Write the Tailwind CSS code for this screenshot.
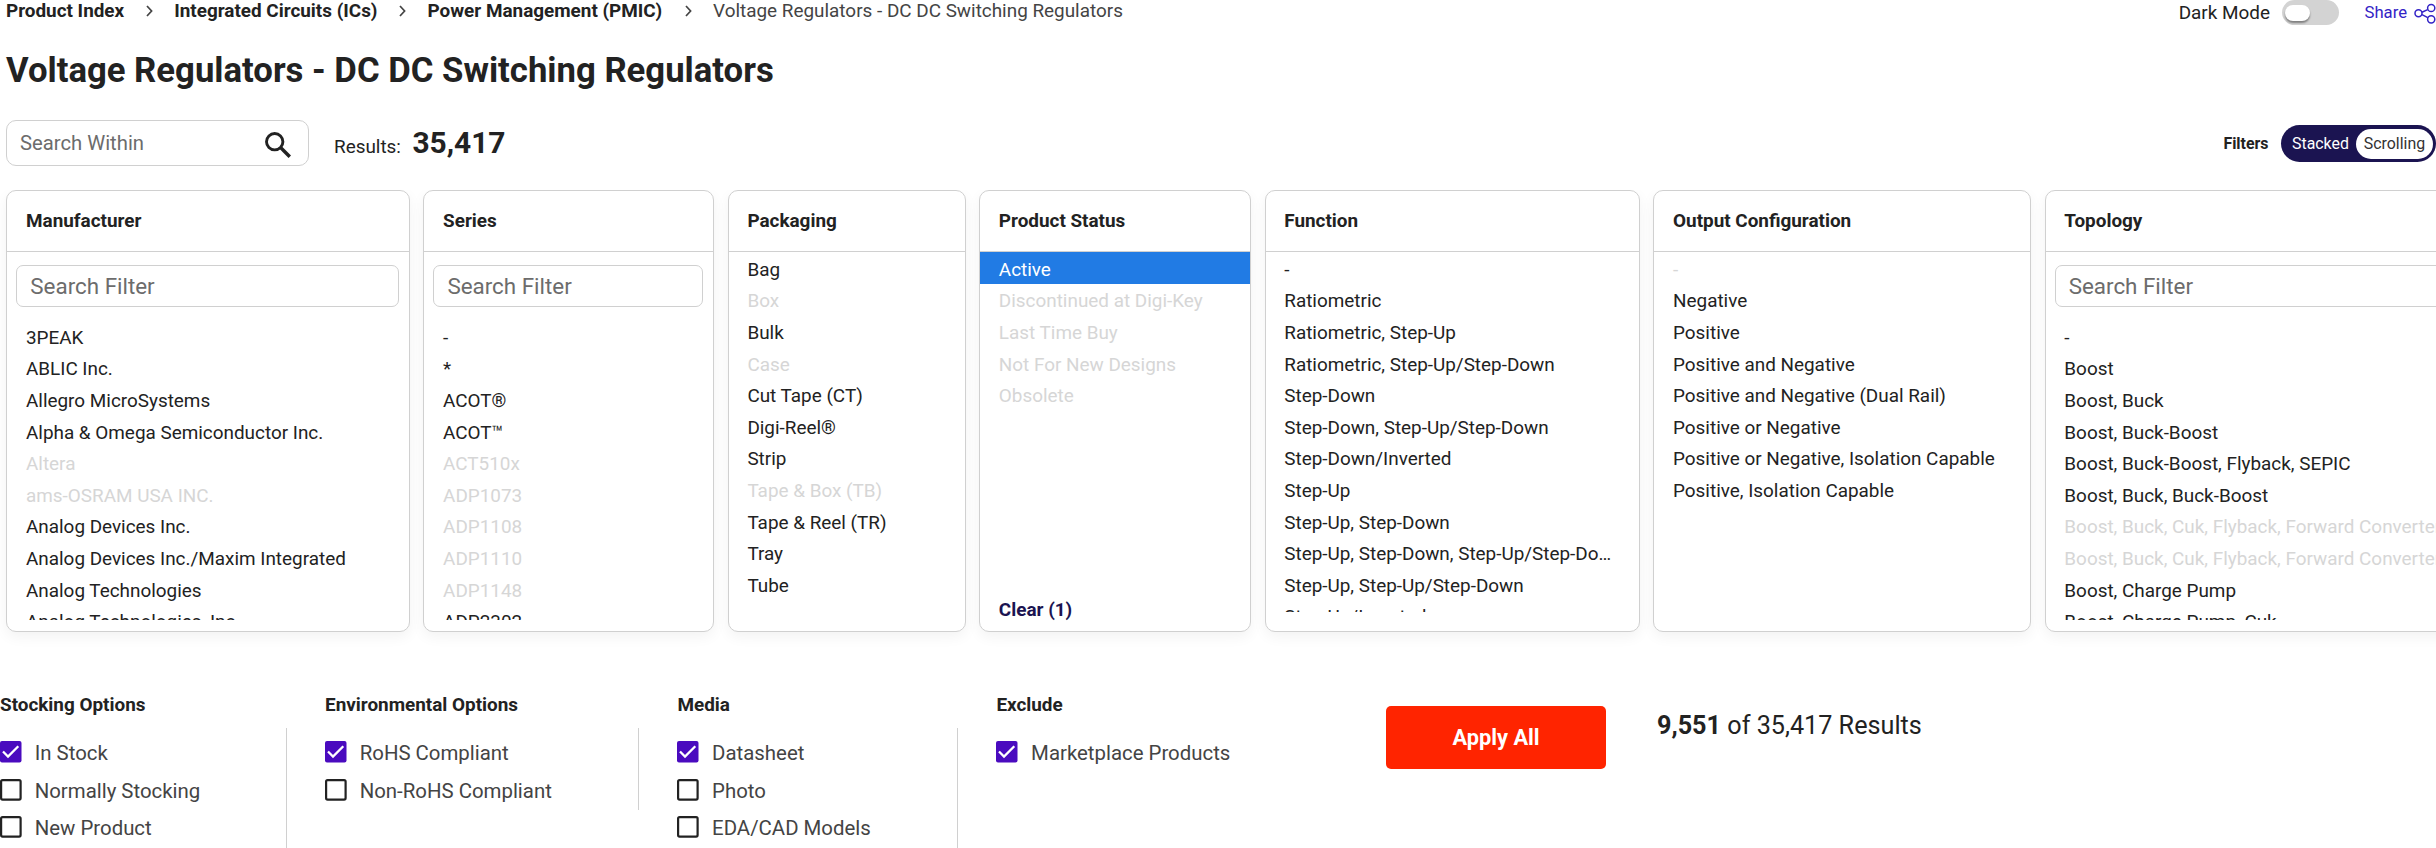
<!DOCTYPE html>
<html lang="en">
<head>
<meta charset="utf-8">
<title>Voltage Regulators - DC DC Switching Regulators</title>
<script src="https://cdn.jsdelivr.net/npm/@tailwindcss/browser@4"></script>
</head>
<body class="h-[848px] w-[2436px] overflow-hidden bg-white font-[Roboto,sans-serif] text-[18.9px] leading-[22px] text-[#222]">
  <header class="flex h-[25px] items-start justify-between pl-[6px]">
    <nav class="flex items-center font-bold">
      <span>Product Index</span>
      <svg class="mr-[21px] ml-[22px] h-3 w-[7px]" viewBox="0 0 7 12" fill="none" stroke="#444" stroke-width="1.7"><path d="M1 1l4.6 5L1 11"/></svg>
      <span>Integrated Circuits (ICs)</span>
      <svg class="mr-[21px] ml-[22px] h-3 w-[7px]" viewBox="0 0 7 12" fill="none" stroke="#444" stroke-width="1.7"><path d="M1 1l4.6 5L1 11"/></svg>
      <span>Power Management (PMIC)</span>
      <svg class="mr-[21.5px] ml-[22.5px] h-3 w-[7px]" viewBox="0 0 7 12" fill="none" stroke="#444" stroke-width="1.7"><path d="M1 1l4.6 5L1 11"/></svg>
      <span class="font-normal text-[#444]">Voltage Regulators - DC DC Switching Regulators</span>
    </nav>
    <div class="flex h-[25px] items-center">
      <span>Dark Mode</span>
      <span class="ml-[12px] flex h-[25px] w-[57px] items-center rounded-full bg-[#d3d3d3] pl-[3px]"><span class="h-4 w-[25px] rounded-full bg-white shadow-[0_2px_2px_rgba(0,0,0,0.4)]"></span></span>
      <span class="ml-[25.5px] text-[16.7px] text-[#3323c6]">Share</span>
      <svg class="ml-[7px] h-[25px] w-[22px]" viewBox="0 0 22 25" fill="none" stroke="#3323c6" stroke-width="1.5"><circle cx="4.5" cy="13.3" r="3.5"/><circle cx="17.2" cy="8" r="3.6"/><circle cx="17.2" cy="19.3" r="3.6"/><path d="M8 12.2l5.6-2.6M8 14.6l5.8 3"/></svg>
    </div>
  </header>
  <h1 class="mt-[25px] pl-[6px] text-[34.7px] leading-[40px] font-bold">Voltage Regulators - DC DC Switching Regulators</h1>

  <section class="mt-[30px] flex h-[46px] items-center justify-between pl-[6px]">
    <div class="flex items-center">
      <div class="flex h-[46px] w-[303px] items-center justify-between rounded-[10px] border border-[#d0d0d0] pr-[17px] pl-[13px] text-[20.25px] text-[#6c6c6c]">
        <span>Search Within</span>
        <svg class="mt-[4px] h-[26px] w-[26px]" viewBox="0 0 26 26" fill="none" stroke="#222" stroke-width="2.9"><circle cx="9.7" cy="9.7" r="8.2"/><path d="M15.8 15.8l9 9" stroke-width="3.4"/></svg>
      </div>
      <div class="mt-[-1px] ml-[25px] flex items-baseline gap-[11.5px]"><span>Results:</span><span class="text-[29.9px] leading-[30px] font-bold">35,417</span></div>
    </div>
    <div class="flex items-center pt-px text-[15.9px]">
      <span class="font-bold">Filters</span>
      <span class="ml-[12.5px] flex h-[37px] w-[155px] items-center rounded-full bg-[#1b1451] pr-[3px] pl-[11px] text-white">
        <span class="w-[64px]">Stacked</span>
        <span class="flex h-[30px] flex-1 items-center justify-center rounded-full bg-white text-[#333]">Scrolling</span>
      </span>
    </div>
  </section>

  <main id="filters" class="mt-[24px] flex h-[465px] items-start gap-[13.3px] overflow-hidden pl-[6.3px]"></main>

  <section class="flex items-start pt-[39px]">
    <div id="options" class="flex w-[1386px]"></div>
    <button class="mt-[12px] h-[63px] w-[220px] rounded-[5px] bg-[#ff2400] text-[21.8px] font-bold text-white">Apply All</button>
    <p class="mt-[17px] ml-[51px] text-[25.2px] leading-[30px]"><b>9,551</b> of 35,417 Results</p>
  </section>

<script>
// A leading "~" marks an unavailable value, a leading "+" a selected one.
const filters = [
  ['Manufacturer', 403.8, true, ['3PEAK','ABLIC Inc.','Allegro MicroSystems','Alpha & Omega Semiconductor Inc.','~Altera','~ams-OSRAM USA INC.','Analog Devices Inc.','Analog Devices Inc./Maxim Integrated','Analog Technologies','Analog Technologies, Inc.']],
  ['Series', 291, true, ['-','*','ACOT®','ACOT™','~ACT510x','~ADP1073','~ADP1108','~ADP1110','~ADP1148','ADP2302']],
  ['Packaging', 238.2, false, ['Bag','~Box','Bulk','~Case','Cut Tape (CT)','Digi-Reel®','Strip','~Tape & Box (TB)','Tape & Reel (TR)','Tray','Tube']],
  ['Product Status', 272.1, false, ['+Active','~Discontinued at Digi-Key','~Last Time Buy','~Not For New Designs','~Obsolete']],
  ['Function', 375.5, false, ['-','Ratiometric','Ratiometric, Step-Up','Ratiometric, Step-Up/Step-Down','Step-Down','Step-Down, Step-Up/Step-Down','Step-Down/Inverted','Step-Up','Step-Up, Step-Down','Step-Up, Step-Down, Step-Up/Step-Down','Step-Up, Step-Up/Step-Down','Step-Up/Inverted']],
  ['Output Configuration', 378, false, ['~-','Negative','Positive','Positive and Negative','Positive and Negative (Dual Rail)','Positive or Negative','Positive or Negative, Isolation Capable','Positive, Isolation Capable']],
  ['Topology', 480, true, ['-','Boost','Boost, Buck','Boost, Buck-Boost','Boost, Buck-Boost, Flyback, SEPIC','Boost, Buck, Buck-Boost','~Boost, Buck, Cuk, Flyback, Forward Converter','~Boost, Buck, Cuk, Flyback, Forward Converter','Boost, Charge Pump','Boost, Charge Pump, Cuk']],
];
const esc = s => s.replace(/&/g, '&amp;');
const item = s => {
  const tone = s[0] === '~' ? 'text-[#d6d6d6]' : s[0] === '+' ? 'bg-[#217be4] text-white' : '';
  return `<li class="h-[31.6px] truncate pt-[2.8px] pr-[26px] pl-[18.7px] leading-[30px] ${tone}">${esc(s.replace(/^[~+]/, ''))}</li>`;
};
document.getElementById('filters').innerHTML = filters.map(([title, width, search, items]) => `
  <div class="flex h-[442px] shrink-0 flex-col rounded-[10px] border border-[#d0d0d0] bg-white shadow-[0_5px_14px_rgba(0,0,0,0.05)]" style="width:${width}px">
    <h2 class="flex h-[61px] shrink-0 items-center border-b border-[#d0d0d0] pl-[18.7px] font-bold">${title}</h2>
    ${search ? '<div class="mr-[10px] ml-[9px] mt-[13px] mb-[13px] flex h-[42px] shrink-0 items-center rounded-[7px] border border-[#d0d0d0] pl-[13px] text-[22.4px] text-[#6c6c6c]">Search Filter</div>' : ''}
    <ul class="overflow-hidden ${search ? 'h-[300px]' : 'h-[360px]'}">${items.map(item).join('')}</ul>
    ${title === 'Product Status' ? '<a class="mt-[-13px] pl-[18.7px] font-bold text-[#1b1451]">Clear (1)</a>' : ''}
  </div>`).join('');

const options = [
  ['Stocking Options', 'w-[325px]', 'w-[287px] h-[120px] border-r', ['+In Stock','Normally Stocking','New Product']],
  ['Environmental Options', 'w-[352.4px]', 'w-[314px] h-[82px] border-r', ['+RoHS Compliant','Non-RoHS Compliant']],
  ['Media', 'w-[319px]', 'w-[281px] h-[120px] border-r', ['+Datasheet','Photo','EDA/CAD Models']],
  ['Exclude', 'w-[389.6px]', '', ['+Marketplace Products']],
];
const box = on => on
  ? '<svg class="h-[22px] w-[22px] shrink-0" viewBox="0 0 22 22"><rect width="21.5" height="21.5" rx="2" fill="#4a0bbf"/><path d="M3 10.5l5 5L18.3 5.2" fill="none" stroke="#fff" stroke-width="2.3"/></svg>'
  : '<svg class="h-[22px] w-[22px] shrink-0" viewBox="0 0 22 22"><rect x="1.1" y="1.1" width="19.5" height="19.5" rx="1.5" fill="none" stroke="#222" stroke-width="2.2"/></svg>';
document.getElementById('options').innerHTML = options.map(([title, width, frame, items]) => `
  <div class="${width} shrink-0">
    <h3 class="font-bold">${title}</h3>
    <div class="${frame} mt-[12px] border-[#d0d0d0] pt-[5px]">
      ${items.map(s => `<label class="flex h-[37.8px] items-center gap-[12.7px] text-[20.4px] text-[#444]">${box(s[0] === '+')}<span class="pt-[2px]">${s.replace('+', '')}</span></label>`).join('')}
    </div>
  </div>`).join('');
</script>
</body>
</html>
